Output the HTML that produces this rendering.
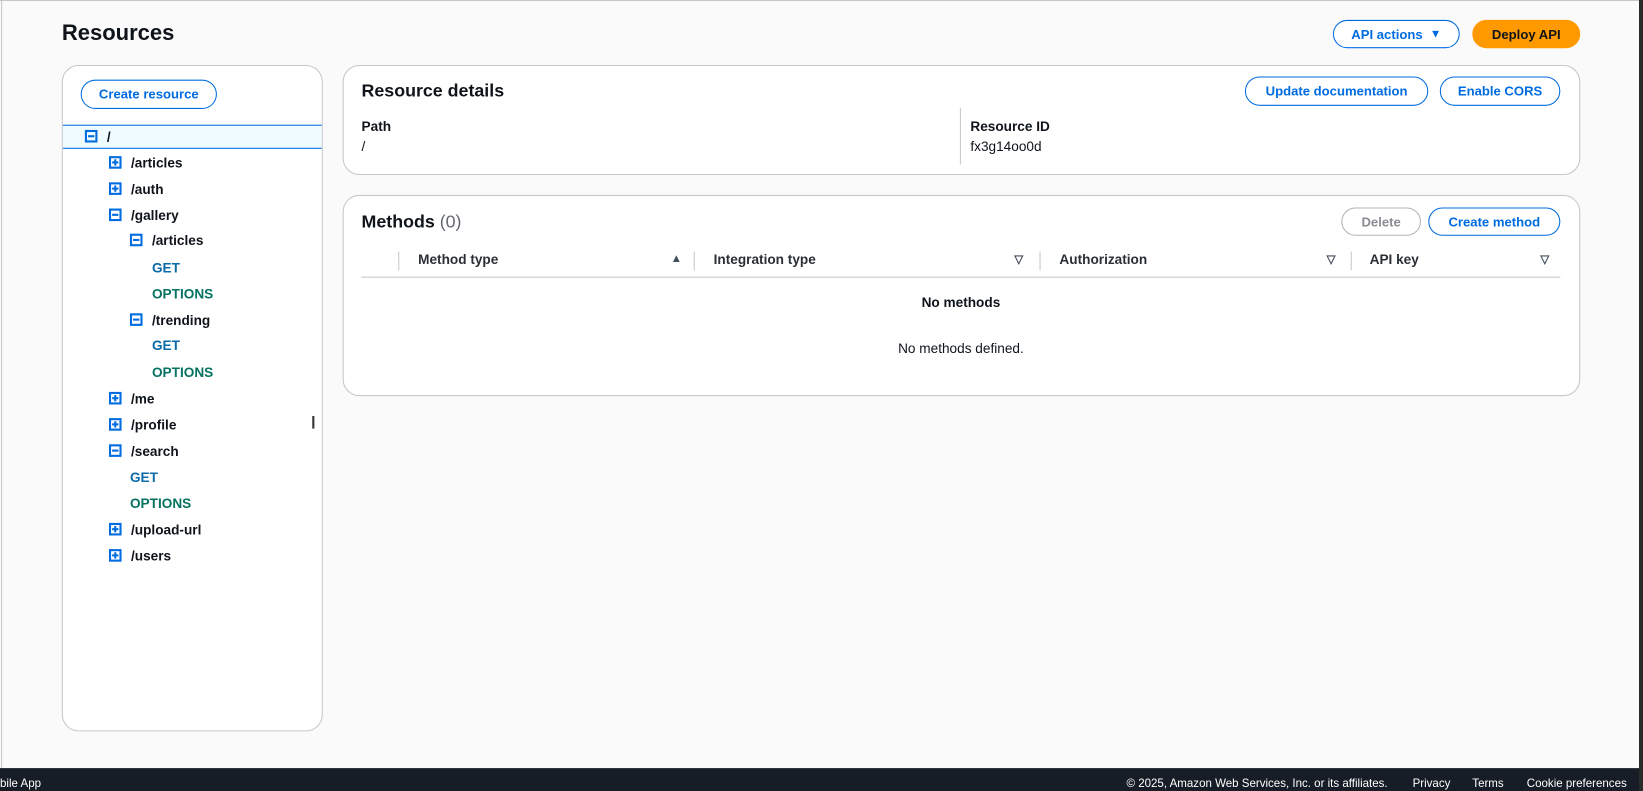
<!DOCTYPE html>
<html><head><meta charset="utf-8"><style>
*{box-sizing:border-box;margin:0;padding:0}
body{width:1643px;height:791px;background:#fafafa;font-family:"Liberation Sans",Arial,sans-serif;color:#0f141a;position:relative;overflow:hidden;font-size:13px}
#w{position:absolute;left:0;top:0;width:1568px;height:755px;transform:scale(1.0479);transform-origin:0 0}
.abs{position:absolute}
.btn{position:absolute;border:1.5px solid #006ce0;border-radius:20px;color:#006ce0;font-weight:bold;font-size:12.5px;display:flex;align-items:center;justify-content:center;background:#fff}
.card{position:absolute;background:#fff;border:1px solid #c6c6cd;border-radius:16px}
.row{position:absolute;font-weight:bold;font-size:13px;display:flex;align-items:center;height:20px}
.ic{width:12px;height:12px;border:2px solid #006ce0;position:relative;margin-right:9px;display:inline-block}
.ic:before{content:"";position:absolute;left:1px;top:3px;width:6px;height:2px;background:#006ce0}
.ic.p:after{content:"";position:absolute;left:3px;top:1px;width:2px;height:6px;background:#006ce0}
.get{color:#0b6ba8}.opt{color:#067362}
.th{position:absolute;top:240px;font-weight:bold;font-size:13px;color:#2a2f36}
.sep{position:absolute;top:240px;width:1px;height:18px;background:#c6c6cd}
.sort{position:absolute;top:241px;font-size:11px;font-weight:bold;color:#414d5c}
</style></head><body>
<div id="w">
<div class="abs" style="left:0;top:0;width:1568px;height:1px;background:#c6c6cd"></div>
<div class="abs" style="left:1px;top:0;width:1px;height:733px;background:#c6c6cd"></div>
<div class="abs" style="left:59px;top:20px;font-size:21px;font-weight:bold">Resources</div>
<div class="btn" style="left:1272px;top:19px;width:121px;height:27px">API actions&nbsp;&nbsp;<span style="font-size:11px">▼</span></div>
<div class="btn" style="left:1405px;top:19px;width:103px;height:27px;background:#ff9900;border-color:#ff9900;color:#0f141a">Deploy API</div>

<div class="card" style="left:59px;top:62px;width:249px;height:636px"></div>
<div class="btn" style="left:77px;top:76px;width:130px;height:28px">Create resource</div>
<div class="abs" style="left:60px;top:119px;width:247px;height:23px;background:#f0fbff;border-top:1px solid #006ce0;border-bottom:1px solid #006ce0"></div>
<div class="row" style="left:81px;top:120px"><span class="ic"></span>/</div>
<div class="row" style="left:104px;top:145px"><span class="ic p"></span>/articles</div>
<div class="row" style="left:104px;top:170px"><span class="ic p"></span>/auth</div>
<div class="row" style="left:104px;top:195px"><span class="ic"></span>/gallery</div>
<div class="row" style="left:124px;top:219px"><span class="ic"></span>/articles</div>
<div class="row get" style="left:145px;top:245px">GET</div>
<div class="row opt" style="left:145px;top:270px">OPTIONS</div>
<div class="row" style="left:124px;top:295px"><span class="ic"></span>/trending</div>
<div class="row get" style="left:145px;top:319px">GET</div>
<div class="row opt" style="left:145px;top:345px">OPTIONS</div>
<div class="row" style="left:104px;top:370px"><span class="ic p"></span>/me</div>
<div class="row" style="left:104px;top:395px"><span class="ic p"></span>/profile</div>
<div class="abs" style="left:298px;top:397px;width:2px;height:12px;background:#333"></div>
<div class="row" style="left:104px;top:420px"><span class="ic"></span>/search</div>
<div class="row get" style="left:124px;top:445px">GET</div>
<div class="row opt" style="left:124px;top:470px">OPTIONS</div>
<div class="row" style="left:104px;top:495px"><span class="ic p"></span>/upload-url</div>
<div class="row" style="left:104px;top:520px"><span class="ic p"></span>/users</div>

<div class="card" style="left:327px;top:62px;width:1181px;height:105px"></div>
<div class="abs" style="left:345px;top:77px;font-size:17px;font-weight:bold">Resource details</div>
<div class="btn" style="left:1188px;top:73px;width:175px;height:28px">Update documentation</div>
<div class="btn" style="left:1374px;top:73px;width:115px;height:28px">Enable CORS</div>
<div class="abs" style="left:345px;top:113px;font-weight:bold">Path</div>
<div class="abs" style="left:345px;top:132px">/</div>
<div class="abs" style="left:916px;top:103px;width:1px;height:54px;background:#c6c6cd"></div>
<div class="abs" style="left:926px;top:113px;font-weight:bold">Resource ID</div>
<div class="abs" style="left:926px;top:132px">fx3g14oo0d</div>

<div class="card" style="left:327px;top:186px;width:1181px;height:192px"></div>
<div class="abs" style="left:345px;top:202px;font-size:17px;font-weight:bold">Methods <span style="font-weight:normal;color:#656871">(0)</span></div>
<div class="btn" style="left:1280px;top:198px;width:76px;height:27px;border-color:#b4b4bb;color:#8c8c94">Delete</div>
<div class="btn" style="left:1363px;top:198px;width:126px;height:27px">Create method</div>
<div class="sep" style="left:380px"></div>
<div class="th" style="left:399px">Method type</div>
<div class="sort" style="left:640px">▲</div>
<div class="sep" style="left:662px"></div>
<div class="th" style="left:681px">Integration type</div>
<div class="sort" style="left:968px">▽</div>
<div class="sep" style="left:992px"></div>
<div class="th" style="left:1011px">Authorization</div>
<div class="sort" style="left:1266px">▽</div>
<div class="sep" style="left:1289px"></div>
<div class="th" style="left:1307px">API key</div>
<div class="sort" style="left:1470px">▽</div>
<div class="abs" style="left:345px;top:264px;width:1144px;height:1px;background:#c6c6cd"></div>
<div class="abs" style="left:345px;top:281px;width:1144px;text-align:center;font-weight:bold">No methods</div>
<div class="abs" style="left:345px;top:325px;width:1144px;text-align:center">No methods defined.</div>

<div class="abs" style="left:0;top:733px;width:1568px;height:22px;background:#161d26;color:#fff;font-size:11px">
<div class="abs" style="left:0;top:9px">bile App</div>
<div class="abs" style="left:1075px;top:9px">© 2025, Amazon Web Services, Inc. or its affiliates.</div>
<div class="abs" style="left:1348px;top:9px">Privacy</div>
<div class="abs" style="left:1405px;top:9px">Terms</div>
<div class="abs" style="left:1457px;top:9px">Cookie preferences</div>
</div>
</div>
<div class="abs" style="left:1639px;top:0;width:4px;height:791px;background:#2a2a2a"></div>
</body></html>
